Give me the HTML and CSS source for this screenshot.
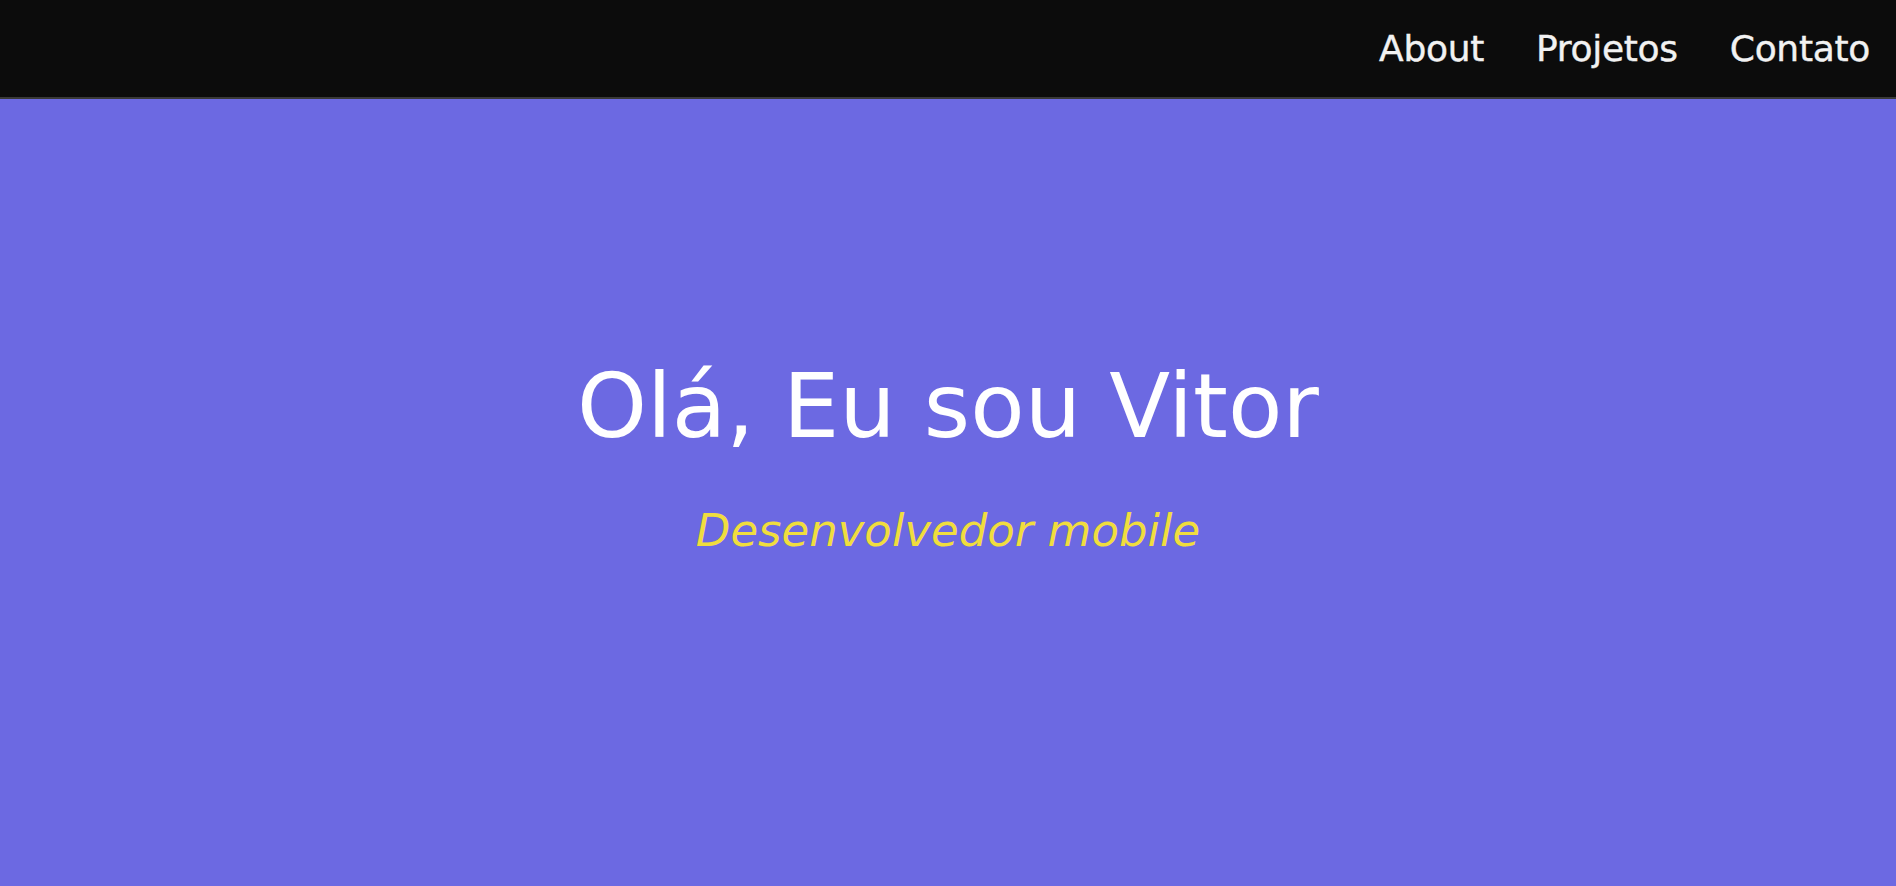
FILE: index.html
```html
<!DOCTYPE html>
<html lang="pt-BR">
<head>
<meta charset="utf-8">
<title>Vitor</title>
<link rel="stylesheet" href="styles.css">
</head>
<body>
<header class="topbar">
  <nav class="nav">
    <a class="nav-link" href="#about">About</a>
    <a class="nav-link" href="#projetos">Projetos</a>
    <a class="nav-link" href="#contato">Contato</a>
  </nav>
</header>
<main class="hero">
  <h1 class="hero-title">Olá, Eu sou Vitor</h1>
  <p class="hero-subtitle">Desenvolvedor mobile</p>
</main>
</body>
</html>
```

FILE: styles.css
```css
* { box-sizing: border-box; }
html, body { margin: 0; padding: 0; }
body {
  font-family: "DejaVu Sans", "Liberation Sans", sans-serif;
  background: #6c69e2;
  overflow: hidden;
}
.topbar {
  height: 99px;
  background: #0c0c0c;
  border-bottom: 2px solid #3a3a38;
  display: flex;
  align-items: center;
  justify-content: flex-end;
  padding-right: 26px;
}
.nav {
  display: flex;
  gap: 52px;
  align-items: center;
}
.nav-link {
  color: #f2f2f2;
  text-decoration: none;
  font-size: 36px;
  letter-spacing: -0.3px;
  -webkit-text-stroke: 0.4px #f2f2f2;
}
.hero {
  height: calc(100vh - 99px);
  display: flex;
  flex-direction: column;
  align-items: center;
  padding-top: 255px;
}
.hero-title {
  margin: 0;
  font-size: 89px;
  font-weight: 400;
  color: #ffffff;
  line-height: normal;
}
.hero-subtitle {
  margin: 46px 0 0;
  font-size: 45px;
  font-style: italic;
  color: #f0dd3e;
  line-height: normal;
}
```
